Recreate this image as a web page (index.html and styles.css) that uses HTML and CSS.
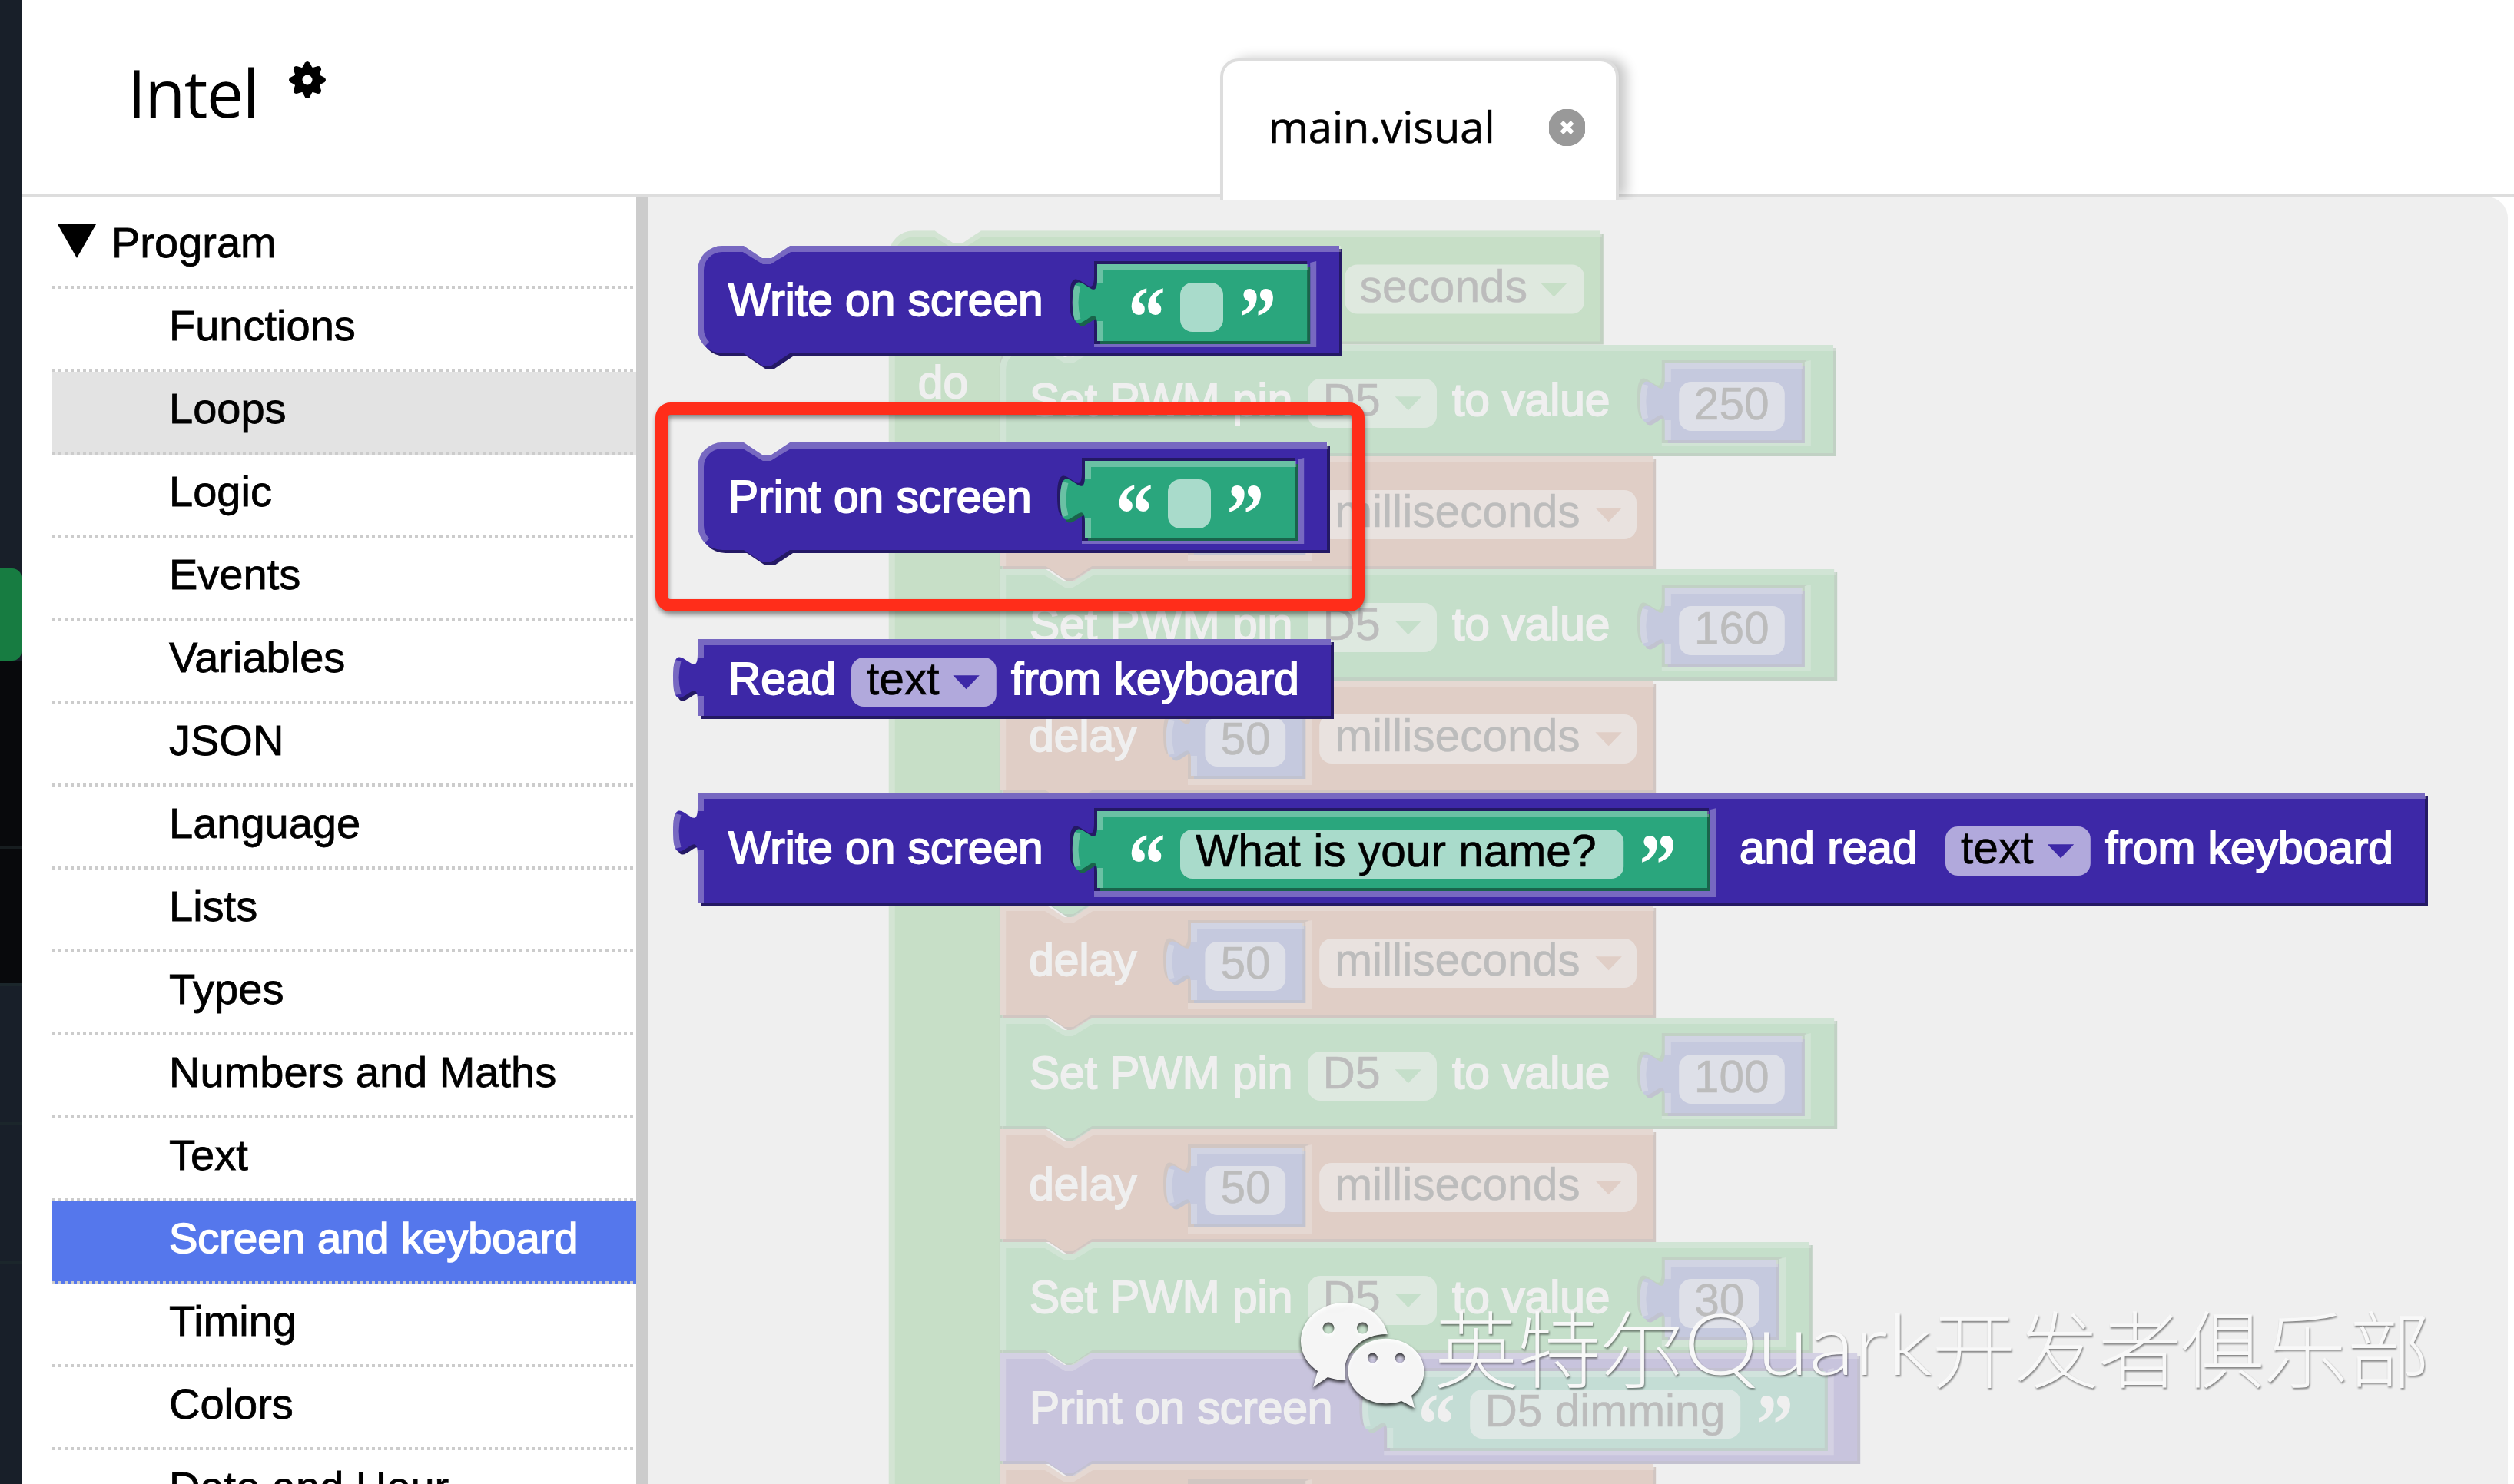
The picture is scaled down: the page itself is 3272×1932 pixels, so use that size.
FILE: index.html
```html
<!DOCTYPE html>
<html lang="en">
<head>
    <meta charset="UTF-8">
    <meta name="viewport" content="width=device-width, initial-scale=1.0">
    <title>Intel - main.visual</title>
    <link rel="stylesheet" href="styles.css">
</head>
<body>
    <div class="rail">
        <div class="rail-top"></div>
        <div class="rail-run"></div>
        <div class="rail-dark"></div>
        <div class="rail-dark rail-dark-last"></div>
        <div class="rail-item"></div>
        <div class="rail-item"></div>
        <div class="rail-item rail-rest"></div>
    </div>
    <div class="app">
        <div class="header">
            <h1>Intel</h1>
            <svg class="gear" viewBox="-24 -24 48 48">
                <defs>
                    <path id="tooth" d="M-7,-15 L-3,-22.5 Q0,-25.500 3,-22.500 L7,-15 Z"/>
                </defs>
                <use href="#tooth"/>
                <use href="#tooth" transform="rotate(45)"/>
                <use href="#tooth" transform="rotate(90)"/>
                <use href="#tooth" transform="rotate(135)"/>
                <use href="#tooth" transform="rotate(180)"/>
                <use href="#tooth" transform="rotate(225)"/>
                <use href="#tooth" transform="rotate(270)"/>
                <use href="#tooth" transform="rotate(315)"/>
                <circle class="gear-ring" r="12"/>
            </svg>
            <div class="tab">
                <span>main.visual</span>
                <svg class="close" viewBox="0 0 48 48">
                    <circle cx="24" cy="24" r="25"/>
                    <path d="M17 17 L31 31 M31 17 L17 31"/>
                </svg>
            </div>
        </div>
        <div class="main">
            <ul class="toolbox">
                <li class="root"><span class="triangle"></span>Program</li>
                <li>Functions</li>
                <li class="hover">Loops</li>
                <li>Logic</li>
                <li>Events</li>
                <li>Variables</li>
                <li>JSON</li>
                <li>Language</li>
                <li>Lists</li>
                <li>Types</li>
                <li>Numbers and Maths</li>
                <li>Text</li>
                <li class="selected">Screen and keyboard</li>
                <li>Timing</li>
                <li>Colors</li>
                <li>Date and Hour</li>
            </ul>
            <div class="splitter"></div>
            <div class="workspace">
                <svg class="canvas" viewBox="0 0 605 419">
                    <defs>
                        <!-- stacked statement blocks -->
                        <g id="pwm">
                            <path class="dark" transform="translate(1,1)" d="M0,0 H15 l6,4 3,0 6,-4 H271.500 V35.250 H30 l-6,4 -3,0 -6,-4 H0 z"/>
                            <path class="fill" d="M0,0 H15 l6,4 3,0 6,-4 H271.500 V35.250 H30 l-6,4 -3,0 -6,-4 H0 z"/>
                            <path class="light" d="M1,35.250 V1 H15 l6.500,4 2,0 6.500,-4 H272"/>
                        </g>
                        <g id="pwm-short">
                            <path class="dark" transform="translate(1,1)" d="M0,0 H15 l6,4 3,0 6,-4 H263.400 V35.250 H30 l-6,4 -3,0 -6,-4 H0 z"/>
                            <path class="fill" d="M0,0 H15 l6,4 3,0 6,-4 H263.400 V35.250 H30 l-6,4 -3,0 -6,-4 H0 z"/>
                            <path class="light" d="M1,35.250 V1 H15 l6.500,4 2,0 6.500,-4 H263.900"/>
                        </g>
                        <g id="delay">
                            <path class="dark" transform="translate(1,1)" d="M0,0 H15 l6,4 3,0 6,-4 H212.500 V35.750 H30 l-6,4 -3,0 -6,-4 H0 z"/>
                            <path class="fill" d="M0,0 H15 l6,4 3,0 6,-4 H212.500 V35.750 H30 l-6,4 -3,0 -6,-4 H0 z"/>
                            <path class="light" d="M1,35.750 V1 H15 l6.500,4 2,0 6.500,-4 H213"/>
                        </g>
                        <g id="print">
                            <path class="dark" transform="translate(1,1)" d="M0,0 H15 l6,4 3,0 6,-4 H279 V35.250 H30 l-6,4 -3,0 -6,-4 H0 z"/>
                            <path class="fill" d="M0,0 H15 l6,4 3,0 6,-4 H279 V35.250 H30 l-6,4 -3,0 -6,-4 H0 z"/>
                            <path class="light" d="M1,35.250 V1 H15 l6.500,4 2,0 6.500,-4 H279.500"/>
                        </g>
                        <!-- sockets, drawn in the colour of the parent block -->
                        <g id="socket-36">
                            <path class="dark" d="M-1,-1 H38 V26 H-1 V19 c0,-10 -8,8 -8,-7.500 s8,2.500 8,-7.500 z"/>
                            <path class="light-fill" d="M-1,26 H37.300 V-.5 L39.300,-1 V28 H-1 z"/>
                        </g>
                        <g id="socket-44">
                            <path class="dark" d="M-1,-1 H46 V26 H-1 V19 c0,-10 -8,8 -8,-7.500 s8,2.500 8,-7.500 z"/>
                            <path class="light-fill" d="M-1,26 H45.500 V-.5 L47.500,-1 V27 H-1 z"/>
                        </g>
                        <!-- value blocks -->
                        <g id="value-36">
                            <path class="dark" transform="translate(1,1)" d="M0,0 H36.300 V25 H0 V20 c0,-10 -8,8 -8,-7.500 s8,2.500 8,-7.500 z"/>
                            <path class="fill" d="M0,0 H36.300 V25 H0 V20 c0,-10 -8,8 -8,-7.500 s8,2.500 8,-7.500 z"/>
                            <path class="light" d="M1,25 V18.500 m-7.360,-.5 q-1.520,-5.500 0,-11 m7.360,-1 V1 H36.800"/>
                            <rect class="field" x="4.600" y="6" width="26.200" height="16" rx="4"/>
                        </g>
                        <g id="value-44">
                            <path class="dark" transform="translate(1,1)" d="M0,0 H44.500 V25 H0 V20 c0,-10 -8,8 -8,-7.500 s8,2.500 8,-7.500 z"/>
                            <path class="fill" d="M0,0 H44.500 V25 H0 V20 c0,-10 -8,8 -8,-7.500 s8,2.500 8,-7.500 z"/>
                            <path class="light" d="M1,25 V18.500 m-7.360,-.5 q-1.520,-5.500 0,-11 m7.360,-1 V1 H45"/>
                            <rect class="field" x="4.600" y="6" width="34.400" height="16" rx="4"/>
                        </g>
                        <g id="value-68">
                            <path class="dark" transform="translate(1,1)" d="M0,0 H68.300 V25 H0 V20 c0,-10 -8,8 -8,-7.500 s8,2.500 8,-7.500 z"/>
                            <path class="fill" d="M0,0 H68.300 V25 H0 V20 c0,-10 -8,8 -8,-7.500 s8,2.500 8,-7.500 z"/>
                            <path class="light" d="M1,25 V18.500 m-7.360,-.5 q-1.520,-5.500 0,-11 m7.360,-1 V1 H68.800"/>
                            <rect class="field" x="27" y="6" width="14" height="16" rx="4"/>
                        </g>
                        <path id="arrow" d="M0,0 H8.600 L4.300,4.500 z"/>
                    </defs>

                    <!-- repeat every ... seconds -->
                    <g class="every" transform="translate(78.200,11.100)">
                        <path class="dark" transform="translate(1,1)" d="M0,8 A8,8 0 0 1 8,0 H15 l6,4 3,0 6,-4 H231.500 V36 H66 l-6,4 -3,0 -6,-4 H44 a8,8 0 0 0 -8,8 V430 H0 z"/>
                        <path class="fill" d="M0,8 A8,8 0 0 1 8,0 H15 l6,4 3,0 6,-4 H231.500 V36 H66 l-6,4 -3,0 -6,-4 H44 a8,8 0 0 0 -8,8 V430 H0 z"/>
                        <path class="light" d="M1,430 V8 A7,7 0 0 1 8,1 H15 l6.500,4 2,0 6.500,-4 H232"/>
                        <rect class="field" x="148.400" y="11" width="77.900" height="16" rx="4"/>
                        <text class="value" x="153.200" y="23.200">seconds</text>
                        <use class="fill" href="#arrow" x="212.100" y="17"/>
                        <text x="9.500" y="54.500">do</text>
                    </g>

                    <g class="pwm" transform="translate(114.300,48.250)">
                        <path class="dark" transform="translate(1,1)" d="M0,8 A8,8 0 0 1 8,0 H15 l6,4 3,0 6,-4 H271.200 V35.250 H30 l-6,4 -3,0 -6,-4 H0 z"/>
                        <path class="fill" d="M0,8 A8,8 0 0 1 8,0 H15 l6,4 3,0 6,-4 H271.200 V35.250 H30 l-6,4 -3,0 -6,-4 H0 z"/>
                        <path class="light" d="M1,35.250 V8 A7,7 0 0 1 8,1 H15 l6.500,4 2,0 6.500,-4 H272"/>
                        <text x="9.700" y="22.900">Set PWM pin</text>
                        <rect class="field" x="100.300" y="11" width="41.900" height="16" rx="4"/>
                        <text class="value" x="105.100" y="22.900">D5</text>
                        <use class="fill" href="#arrow" x="128.600" y="16.800"/>
                        <text x="147.200" y="22.900">to value</text>
                        <use href="#socket-44" x="216.400" y="6"/>
                        <g class="number" transform="translate(216.400,6)">
                            <use href="#value-44"/>
                            <text class="value" x="9.500" y="18.300">250</text>
                        </g>
                    </g>
                    <g class="delay" transform="translate(114.300,84.500)">
                        <use href="#delay"/>
                        <text x="9.500" y="22.900">delay</text>
                        <use href="#socket-36" x="62.200" y="6"/>
                        <g class="number" transform="translate(62.200,6)">
                            <use href="#value-36"/>
                            <text class="value" x="9.600" y="18.100">50</text>
                        </g>
                        <rect class="field" x="104" y="11" width="103.200" height="16" rx="4"/>
                        <text class="value" x="109" y="22.900">milliseconds</text>
                        <use class="fill" href="#arrow" x="193.800" y="16.800"/>
                    </g>
                    <g class="pwm" transform="translate(114.300,121.250)">
                        <use href="#pwm"/>
                        <text x="9.700" y="22.900">Set PWM pin</text>
                        <rect class="field" x="100.300" y="11" width="41.900" height="16" rx="4"/>
                        <text class="value" x="105.100" y="22.900">D5</text>
                        <use class="fill" href="#arrow" x="128.600" y="16.800"/>
                        <text x="147.200" y="22.900">to value</text>
                        <use href="#socket-44" x="216.400" y="6"/>
                        <g class="number" transform="translate(216.400,6)">
                            <use href="#value-44"/>
                            <text class="value" x="9.500" y="18.300">160</text>
                        </g>
                    </g>
                    <g class="delay" transform="translate(114.300,157.500)">
                        <use href="#delay"/>
                        <text x="9.500" y="22.900">delay</text>
                        <use href="#socket-36" x="62.200" y="6"/>
                        <g class="number" transform="translate(62.200,6)">
                            <use href="#value-36"/>
                            <text class="value" x="9.600" y="18.100">50</text>
                        </g>
                        <rect class="field" x="104" y="11" width="103.200" height="16" rx="4"/>
                        <text class="value" x="109" y="22.900">milliseconds</text>
                        <use class="fill" href="#arrow" x="193.800" y="16.800"/>
                    </g>
                    <g class="pwm" transform="translate(114.300,194.250)">
                        <use href="#pwm"/>
                    </g>
                    <g class="delay" transform="translate(114.300,230.500)">
                        <use href="#delay"/>
                        <text x="9.500" y="22.900">delay</text>
                        <use href="#socket-36" x="62.200" y="6"/>
                        <g class="number" transform="translate(62.200,6)">
                            <use href="#value-36"/>
                            <text class="value" x="9.600" y="18.100">50</text>
                        </g>
                        <rect class="field" x="104" y="11" width="103.200" height="16" rx="4"/>
                        <text class="value" x="109" y="22.900">milliseconds</text>
                        <use class="fill" href="#arrow" x="193.800" y="16.800"/>
                    </g>
                    <g class="pwm" transform="translate(114.300,267.250)">
                        <use href="#pwm"/>
                        <text x="9.700" y="22.900">Set PWM pin</text>
                        <rect class="field" x="100.300" y="11" width="41.900" height="16" rx="4"/>
                        <text class="value" x="105.100" y="22.900">D5</text>
                        <use class="fill" href="#arrow" x="128.600" y="16.800"/>
                        <text x="147.200" y="22.900">to value</text>
                        <use href="#socket-44" x="216.400" y="6"/>
                        <g class="number" transform="translate(216.400,6)">
                            <use href="#value-44"/>
                            <text class="value" x="9.500" y="18.300">100</text>
                        </g>
                    </g>
                    <g class="delay" transform="translate(114.300,303.500)">
                        <use href="#delay"/>
                        <text x="9.500" y="22.900">delay</text>
                        <use href="#socket-36" x="62.200" y="6"/>
                        <g class="number" transform="translate(62.200,6)">
                            <use href="#value-36"/>
                            <text class="value" x="9.600" y="18.100">50</text>
                        </g>
                        <rect class="field" x="104" y="11" width="103.200" height="16" rx="4"/>
                        <text class="value" x="109" y="22.900">milliseconds</text>
                        <use class="fill" href="#arrow" x="193.800" y="16.800"/>
                    </g>
                    <g class="pwm" transform="translate(114.300,340.250)">
                        <use href="#pwm-short"/>
                        <text x="9.700" y="22.900">Set PWM pin</text>
                        <rect class="field" x="100.300" y="11" width="41.900" height="16" rx="4"/>
                        <text class="value" x="105.100" y="22.900">D5</text>
                        <use class="fill" href="#arrow" x="128.600" y="16.800"/>
                        <text x="147.200" y="22.900">to value</text>
                        <use href="#socket-36" x="216.400" y="6"/>
                        <g class="number" transform="translate(216.400,6)">
                            <use href="#value-36"/>
                            <text class="value" x="9.600" y="18.100">30</text>
                        </g>
                    </g>
                    <g class="screen" transform="translate(114.300,376.250)">
                        <use href="#print"/>
                        <text x="9.700" y="22.900">Print on screen</text>
                        <path class="dark" transform="translate(125,5)" d="M0,0 H143 V27 H0 V20 c0,-10 -8,8 -8,-7.500 s8,2.500 8,-7.500 z"/>
                        <path class="light-fill" transform="translate(126,6)" d="M-1,26 H143.400 V-.5 L145.400,-1 V27.300 H-1 z"/>
                        <g class="string" transform="translate(126,6)">
                            <path class="dark" transform="translate(1,1)" d="M0,0 H142.400 V25 H0 V20 c0,-10 -8,8 -8,-7.500 s8,2.500 8,-7.500 z"/>
                            <path class="fill" d="M0,0 H142.400 V25 H0 V20 c0,-10 -8,8 -8,-7.500 s8,2.500 8,-7.500 z"/>
                            <path class="light" d="M1,25 V18.500 m-7.360,-.5 q-1.520,-5.500 0,-11 m7.360,-1 V1 H142.900"/>
                            <text class="quote" x="10" y="26.900" textLength="12.200" lengthAdjust="spacingAndGlyphs">“</text>
                            <rect class="field" x="27" y="6" width="88" height="16" rx="4"/>
                            <text class="value" x="31.800" y="18">D5 dimming</text>
                            <text class="quote" x="120.100" y="26.900" textLength="12.200" lengthAdjust="spacingAndGlyphs">”</text>
                        </g>
                    </g>
                    <g class="delay" transform="translate(114.300,412.500)">
                        <use href="#delay"/>
                        <use href="#socket-36" x="62.200" y="6"/>
                    </g>

                    <!-- flyout -->
                    <rect class="flyout-background" width="605" height="419"/>

                    <g class="screen" transform="translate(16,16)">
                        <path class="dark" transform="translate(1,1)" d="M0,8 A8,8 0 0 1 8,0 H15 l6,4 3,0 6,-4 H208.750 V35 H30 l-6,4 -3,0 -6,-4 H8 a8,8 0 0 1 -8,-8 z"/>
                        <path class="fill" d="M0,8 A8,8 0 0 1 8,0 H15 l6,4 3,0 6,-4 H208.750 V35 H30 l-6,4 -3,0 -6,-4 H8 a8,8 0 0 1 -8,-8 z"/>
                        <path class="light" d="M3.050,31.950 A7,7 0 0 1 1,27 V8 A7,7 0 0 1 8,1 H15 l6.500,4 2,0 6.500,-4 H209.300"/>
                        <text x="10" y="22.800">Write on screen</text>
                        <path class="dark" transform="translate(129,5)" d="M0,0 H69.300 V27 H0 V20 c0,-10 -8,8 -8,-7.500 s8,2.500 8,-7.500 z"/>
                        <path class="light-fill" transform="translate(130,6)" d="M-1,26 H69.300 V-.5 L71.300,-1 V27 H-1 z"/>
                        <g class="string" transform="translate(130,6)">
                            <use href="#value-68"/>
                            <text class="quote" x="10" y="26.900" textLength="12.200" lengthAdjust="spacingAndGlyphs">“</text>
                            <text class="quote" x="46.100" y="26.900" textLength="12.200" lengthAdjust="spacingAndGlyphs">”</text>
                        </g>
                    </g>

                    <g class="screen" transform="translate(16,80)">
                        <path class="dark" transform="translate(1,1)" d="M0,8 A8,8 0 0 1 8,0 H15 l6,4 3,0 6,-4 H204.750 V35 H30 l-6,4 -3,0 -6,-4 H8 a8,8 0 0 1 -8,-8 z"/>
                        <path class="fill" d="M0,8 A8,8 0 0 1 8,0 H15 l6,4 3,0 6,-4 H204.750 V35 H30 l-6,4 -3,0 -6,-4 H8 a8,8 0 0 1 -8,-8 z"/>
                        <path class="light" d="M3.050,31.950 A7,7 0 0 1 1,27 V8 A7,7 0 0 1 8,1 H15 l6.500,4 2,0 6.500,-4 H205.300"/>
                        <text x="10" y="22.800">Print on screen</text>
                        <path class="dark" transform="translate(125,5)" d="M0,0 H69.300 V27 H0 V20 c0,-10 -8,8 -8,-7.500 s8,2.500 8,-7.500 z"/>
                        <path class="light-fill" transform="translate(126,6)" d="M-1,26 H69.300 V-.5 L71.300,-1 V27 H-1 z"/>
                        <g class="string" transform="translate(126,6)">
                            <use href="#value-68"/>
                            <text class="quote" x="10" y="26.900" textLength="12.200" lengthAdjust="spacingAndGlyphs">“</text>
                            <text class="quote" x="46.100" y="26.900" textLength="12.200" lengthAdjust="spacingAndGlyphs">”</text>
                        </g>
                    </g>

                    <g class="screen" transform="translate(16,144)">
                        <path class="dark" transform="translate(1,1)" d="M0,0 H206 V25 H0 V20 c0,-10 -8,8 -8,-7.500 s8,2.500 8,-7.500 z"/>
                        <path class="fill" d="M0,0 H206 V25 H0 V20 c0,-10 -8,8 -8,-7.500 s8,2.500 8,-7.500 z"/>
                        <path class="light" d="M1,25 V18.500 m-7.360,-.5 q-1.520,-5.500 0,-11 m7.360,-1 V1 H206.500"/>
                        <text x="10" y="17.900">Read</text>
                        <rect class="field" x="50" y="6" width="47.200" height="16" rx="4"/>
                        <text class="value" x="55" y="17.900">text</text>
                        <use class="fill" href="#arrow" x="83.100" y="11.800"/>
                        <text x="102" y="17.900">from keyboard</text>
                    </g>

                    <g class="screen" transform="translate(16,194)">
                        <path class="dark" transform="translate(1,1)" d="M0,0 H562 V36 H0 V20 c0,-10 -8,8 -8,-7.500 s8,2.500 8,-7.500 z"/>
                        <path class="fill" d="M0,0 H562 V36 H0 V20 c0,-10 -8,8 -8,-7.500 s8,2.500 8,-7.500 z"/>
                        <path class="light" d="M1,36 V18.500 m-7.360,-.5 q-1.520,-5.500 0,-11 m7.360,-1 V1 H562.500"/>
                        <text x="10" y="22.900">Write on screen</text>
                        <path class="dark" transform="translate(129,5)" d="M0,0 H200 V27 H0 V20 c0,-10 -8,8 -8,-7.500 s8,2.500 8,-7.500 z"/>
                        <path class="light-fill" transform="translate(130,6)" d="M-1,26 H199.500 V-.5 L201.500,-1 V28 H-1 z"/>
                        <g class="string" transform="translate(130,6)">
                            <path class="dark" transform="translate(1,1)" d="M0,0 H198.500 V25 H0 V20 c0,-10 -8,8 -8,-7.500 s8,2.500 8,-7.500 z"/>
                            <path class="fill" d="M0,0 H198.500 V25 H0 V20 c0,-10 -8,8 -8,-7.500 s8,2.500 8,-7.500 z"/>
                            <path class="light" d="M1,25 V18.500 m-7.360,-.5 q-1.520,-5.500 0,-11 m7.360,-1 V1 H199"/>
                            <text class="quote" x="10" y="26.900" textLength="12.200" lengthAdjust="spacingAndGlyphs">“</text>
                            <rect class="field" x="27" y="6" width="144.300" height="16" rx="4"/>
                            <text class="value" x="32" y="17.900">What is your name?</text>
                            <text class="quote" x="176.400" y="26.900" textLength="12.200" lengthAdjust="spacingAndGlyphs">”</text>
                        </g>
                        <text x="339" y="22.900">and read</text>
                        <rect class="field" x="406" y="11" width="47.200" height="16" rx="4"/>
                        <text class="value" x="411" y="22.900">text</text>
                        <use class="fill" href="#arrow" x="439.200" y="16.800"/>
                        <text x="458" y="22.900">from keyboard</text>
                    </g>
                </svg>
                <div class="highlight"></div>
                <svg class="watermark" viewBox="1680 1680 1500 160">
                    <defs>
                        <mask id="bubble-gap">
                            <rect x="1680" y="1680" width="200" height="160" fill="#fff"/>
                            <ellipse cx="1804" cy="1785" rx="54" ry="48" fill="#000"/>
                            <circle cx="1729" cy="1729" r="7.500" fill="#000"/>
                            <circle cx="1773.400" cy="1729" r="7.500" fill="#000"/>
                        </mask>
                        <mask id="small-eyes">
                            <rect x="1680" y="1680" width="200" height="180" fill="#fff"/>
                            <circle cx="1786.400" cy="1768" r="6.500" fill="#000"/>
                            <circle cx="1822" cy="1768" r="6.500" fill="#000"/>
                        </mask>
                    </defs>
                    <g class="wechat">
                        <path mask="url(#bubble-gap)" d="M1750,1696 c-31.500,0 -57,22.400 -57,50 c0,15.500 8,29.500 22,39 l-6,21 19,-13 c7,2.400 14.500,3.700 22,3.700 c31.500,0 57,-22.600 57,-50.200 s-25.500,-50.500 -57,-50.500 z"/>
                        <path mask="url(#small-eyes)" d="M1804,1742.700 c-27.300,0 -49.500,19 -49.500,42.300 s22.200,42.300 49.500,42.300 c7.500,0 14,-1 20,-3.300 l17,9 -4,-16 c10.500,-7.800 16.500,-19 16.500,-32 c0,-23.300 -22.200,-42.300 -49.500,-42.300 z"/>
                    </g>
                    <g class="club">
                        <text x="1867" y="1798">英特尔</text>
                        <text class="latin" x="2191" y="1790" textLength="324" lengthAdjust="spacingAndGlyphs">Quark</text>
                        <text x="2515" y="1798">开发者俱乐部</text>
                    </g>
                </svg>
            </div>
        </div>
    </div>
</body>
</html>
```
FILE: styles.css
```css
* {
    box-sizing: border-box;
}
body {
    margin: 0;
    height: 1932px;
    display: flex;
    overflow: hidden;
    background-color: #fff;
    font-family: "Liberation Sans", Arial, sans-serif;
    color: #000;
}

/* strip of the page behind the editor */
.rail {
    width: 28px;
    height: 1932px;
    display: flex;
    flex-direction: column;
    background-color: #181f29;
}
.rail-top {
    height: 740px;
}
.rail-run {
    height: 120px;
    background-color: #177c41;
    border-radius: 0 12px 12px 0;
}
.rail-dark {
    height: 242px;
    background-color: #08090c;
}
.rail-dark-last {
    height: 178px;
    border-top: 3px solid #171d20;
}
.rail-item {
    height: 181px;
    border-top: 4px solid #1b262b;
}
.rail-rest {
    flex: 1;
}

.app {
    flex: 1;
    display: flex;
    flex-direction: column;
}
.header {
    height: 256px;
    flex: none;
    display: flex;
    align-items: flex-start;
    border-bottom: 4px solid #ddd;
}
.header h1 {
    width: 180px;
    margin: 60px 0 0 138px;
    font-family: "Open Sans", sans-serif;
    font-size: 86px;
    font-weight: 400;
    line-height: 120px;
    letter-spacing: -1.5px;
    white-space: nowrap;
}
.gear {
    width: 48px;
    height: 48px;
    margin: 80px 0 0 30px;
}
.gear-ring {
    fill: none;
    stroke: #000;
    stroke-width: 11px;
}
.tab {
    position: relative;
    z-index: 1;
    display: flex;
    align-items: center;
    justify-content: space-between;
    width: 519px;
    height: 184px;
    margin: 76px 0 0 1164px;
    padding: 0 40px 14px 59px;
    background-color: #fff;
    border: 4px solid #ddd;
    border-bottom: none;
    border-radius: 24px 24px 0 0;
    box-shadow: 12px -2px 16px -2px rgba(0, 0, 0, 0.22);
    clip-path: inset(-30px -40px 0 -20px);
    font-family: "Open Sans", sans-serif;
    font-size: 56px;
    -webkit-text-stroke: 0.6px #000;
}
.tab span {
    margin-top: 2px;
}
.close {
    width: 47px;
    height: 48px;
    margin-top: 6px;
    fill: #999;
}
.close path {
    stroke: #fff;
    stroke-width: 6px;
}

.main {
    flex: 1;
    display: flex;
}
.toolbox {
    width: 800px;
    margin: 0;
    padding: 12px 0 0 40px;
    list-style: none;
}
.toolbox li {
    height: 108px;
    padding-left: 152px;
    background: repeating-linear-gradient(90deg, #ccc 0 4px, transparent 4px 8px) left bottom / 100% 4px no-repeat;
    font-size: 56px;
    line-height: 95px;
    white-space: nowrap;
    -webkit-text-stroke: 0.8px currentColor;
}
.toolbox .root {
    display: flex;
    padding-left: 7px;
}
.triangle {
    width: 50px;
    height: 44px;
    margin: 24px 20px 0 0;
    background-color: #000;
    clip-path: polygon(0 0, 100% 0, 50% 100%);
}
.toolbox .hover {
    background-color: #e3e3e3;
}
.toolbox .selected {
    background-color: #5577ec;
    color: #fff;
    -webkit-text-stroke-width: 1.6px;
}
.splitter {
    width: 16px;
    background-color: #ccc;
}
.workspace {
    position: relative;
    width: 2420px;
    height: 1676px;
    overflow: hidden;
    border-top-right-radius: 28px;
}
.canvas {
    display: block;
    width: 2420px;
    height: 1676px;
}

/* blocks */
.every {
    --fill: #37af37;
    --dark: #216921;
}
.pwm {
    --fill: #2daf46;
    --dark: #1b692a;
}
.delay {
    --fill: #b45a32;
    --dark: #6c361e;
}
.number {
    --fill: #2d41aa;
    --dark: #1b2766;
}
.screen {
    --fill: #3d28a7;
    --dark: #241964;
}
.string {
    --fill: #2aa67d;
    --dark: #19644b;
}
.fill {
    fill: var(--fill);
}
.dark {
    fill: var(--dark);
}
.light {
    fill: none;
    stroke: #fff;
    stroke-width: 2px;
    stroke-opacity: 0.3;
}
.light-fill {
    fill: color-mix(in srgb, #fff 30%, var(--fill));
}
.field {
    fill: #fff;
    fill-opacity: 0.6;
}
.canvas text {
    fill: #fff;
    stroke: #fff;
    stroke-width: 0.45px;
    font-size: 14.667px;
}
.canvas .value {
    fill: #000;
    stroke: #000;
    stroke-width: 0.15px;
}
.canvas .quote {
    stroke: none;
    font-family: "Liberation Serif", "Times New Roman", serif;
    font-size: 28.5px;
    font-weight: 700;
}
.flyout-background {
    fill: #ebebeb;
    fill-opacity: 0.8;
}

.highlight {
    position: absolute;
    left: 9px;
    top: 268px;
    width: 923px;
    height: 272px;
    border: 16px solid #ff2d1a;
    border-radius: 20px;
    filter: drop-shadow(1px 4px 3px rgba(0, 0, 0, 0.45));
}
.watermark {
    position: absolute;
    left: 836px;
    top: 1424px;
    width: 1500px;
    height: 160px;
}
.wechat {
    fill: #fff;
    fill-opacity: 0.95;
    filter: drop-shadow(0 3px 2px rgba(0, 0, 0, 0.8));
}
.club {
    fill: #f8f8f8;
    stroke: #f8f8f8;
    stroke-width: 1.5px;
    font-family: "Noto Sans CJK SC", sans-serif;
    font-size: 108px;
    font-weight: 100;
    filter: drop-shadow(1px 2px 1px rgba(0, 0, 0, 0.45));
}
.club .latin {
    stroke-width: 0;
    font-family: Lato, sans-serif;
    font-size: 111px;
    font-weight: 300;
}
```
